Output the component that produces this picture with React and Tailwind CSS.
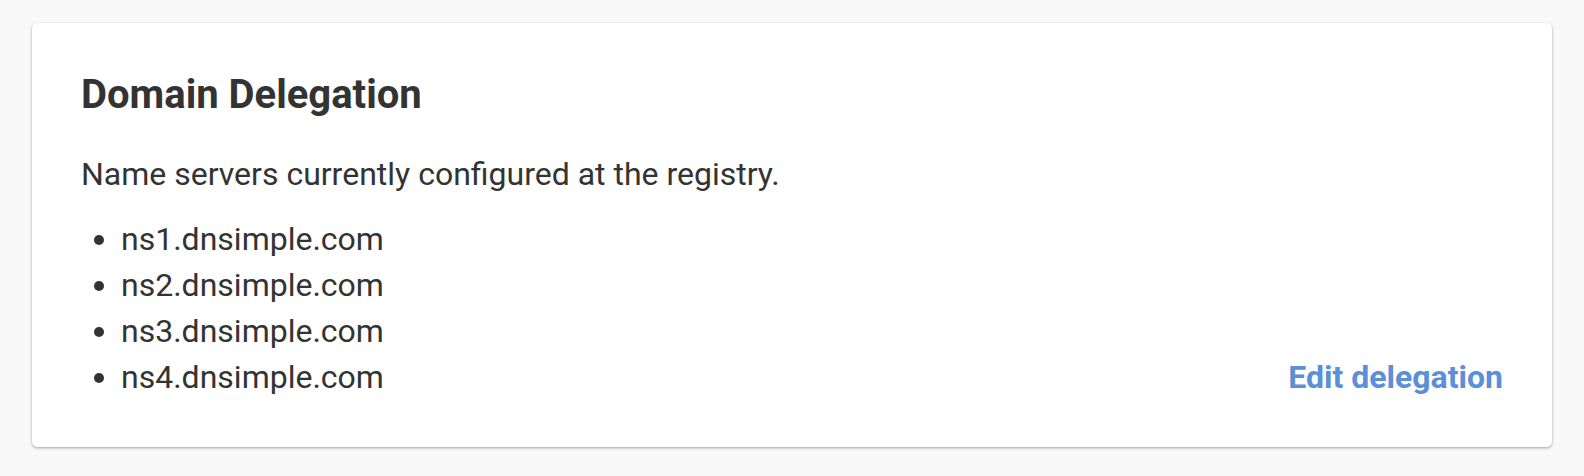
export default function App() {
  const servers = [
    "ns1.dnsimple.com",
    "ns2.dnsimple.com",
    "ns3.dnsimple.com",
    "ns4.dnsimple.com",
  ];

  return (
    <div
      className="min-h-screen bg-[#f9f9f9] pt-[23px] px-[32px] text-[#333333]"
      style={{ fontFamily: "Roboto, 'Liberation Sans', sans-serif" }}
    >
      {/* Carte de délégation */}
      <div className="h-[424px] rounded-[5px] bg-white px-[49px] pt-[48px] shadow-[0_1px_3px_rgba(0,0,0,0.35)]">
        <h2 className="text-[40px] font-bold leading-[48px]">Domain Delegation</h2>
        <p className="mt-[32px] text-[32px] leading-[46px]">
          Name servers currently configured at the registry.
        </p>
        <div className="mt-[19px] flex items-end justify-between">
          <ul className="list-disc pl-[40px] text-[32px] leading-[46px]">
            {servers.map((s) => (
              <li key={s}>{s}</li>
            ))}
          </ul>
          <a href="#" className="text-[32px] font-bold leading-[46px] text-[#5b8fd8]">
            Edit delegation
          </a>
        </div>
      </div>
    </div>
  );
}
